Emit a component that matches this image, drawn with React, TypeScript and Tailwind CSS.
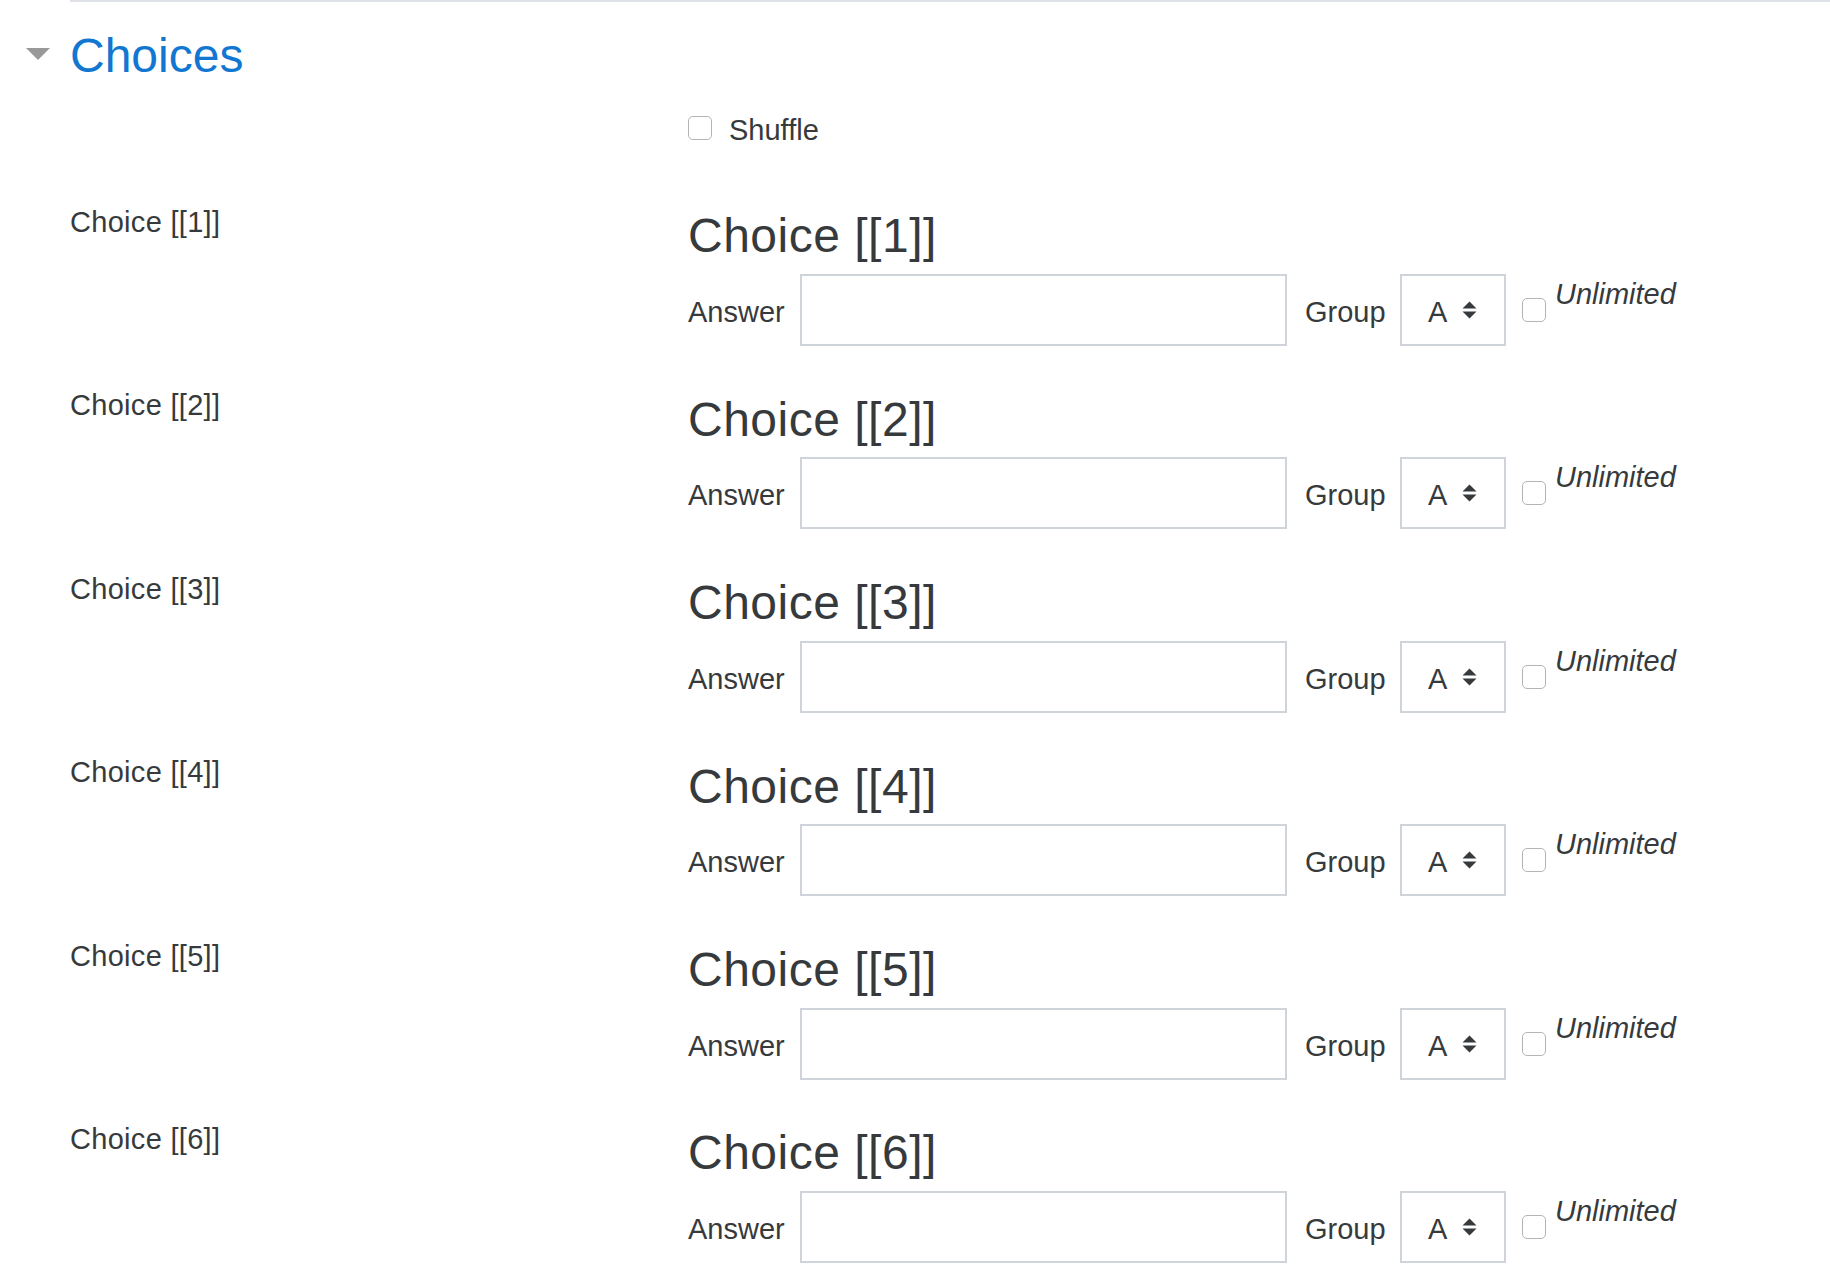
import React from 'react';

const choices = [1, 2, 3, 4, 5, 6];

const Checkbox: React.FC = () => (
  <input
    type="checkbox"
    className="appearance-none w-6 h-6 shrink-0 rounded-[5px] border-[1.5px] border-[#b4b4b4] bg-white"
  />
);

const SelectArrows: React.FC = () => (
  <svg width="15" height="20" viewBox="0 0 15 20" className="ml-[15px]">
    <polygon points="0.5,8.5 7.5,1.5 14.5,8.5" fill="#373a3c" />
    <polygon points="0.5,11.5 14.5,11.5 7.5,18.5" fill="#373a3c" />
  </svg>
);

const ChoiceRow: React.FC<{ n: number }> = ({ n }) => (
  <div className="flex h-[183.4px]">
    <div className="w-[688px] pl-[70px] text-[29px] leading-[36px] tracking-[0.3px]">Choice [[{n}]]</div>
    <div className="flex flex-col pt-[3.4px]">
      <h3 className="text-[48px] leading-[58px] font-normal tracking-[0.5px]">Choice [[{n}]]</h3>
      <div className="mt-[8.6px] flex h-[72px] items-center">
        <label className="w-[112px] text-[29px] leading-[36px] mt-[4px]">Answer</label>
        <input
          type="text"
          className="w-[487px] h-[72px] border-2 border-[#ced4da] bg-white outline-none"
        />
        <label className="w-[113px] pl-[18px] text-[29px] leading-[36px] mt-[4px]">Group</label>
        <div className="flex h-[72px] w-[106px] items-center border-2 border-[#ced4da] pl-[26px]">
          <span className="text-[29px] leading-[36px] mt-[4px]">A</span>
          <SelectArrows />
        </div>
        <div className="ml-[16px] flex h-[72px] items-center">
          <Checkbox />
        </div>
        <span className="ml-[9px] self-start mt-[2px] text-[29px] leading-[36px] italic">Unlimited</span>
      </div>
    </div>
  </div>
);

const App: React.FC = () => {
  return (
    <div className="h-[1286px] overflow-hidden bg-white text-[#373a3c] font-['Liberation_Sans',Arial,sans-serif]">
      <div className="ml-[70px] h-[2px] bg-[#dee2e6]" />

      {/* Section header */}
      <div className="mt-[25px] flex h-[58px] items-center pl-[26px]">
        <svg width="24" height="12" viewBox="0 0 24 12" className="-mt-[4px]">
          <polygon points="0,0 24,0 12,12" fill="#999999" />
        </svg>
        <h2 className="ml-[20px] text-[48px] leading-[58px] font-normal text-[#1177d1]">Choices</h2>
      </div>

      {/* Shuffle */}
      <div className="mt-[25px] flex h-[36px] items-center pl-[688px]">
        <Checkbox />
        <span className="ml-[17px] mt-[4px] text-[29px] leading-[36px]">Shuffle</span>
      </div>

      <div className="mt-[58px]">
        {choices.map((n) => (
          <ChoiceRow key={n} n={n} />
        ))}
      </div>
    </div>
  );
};

export default App;
